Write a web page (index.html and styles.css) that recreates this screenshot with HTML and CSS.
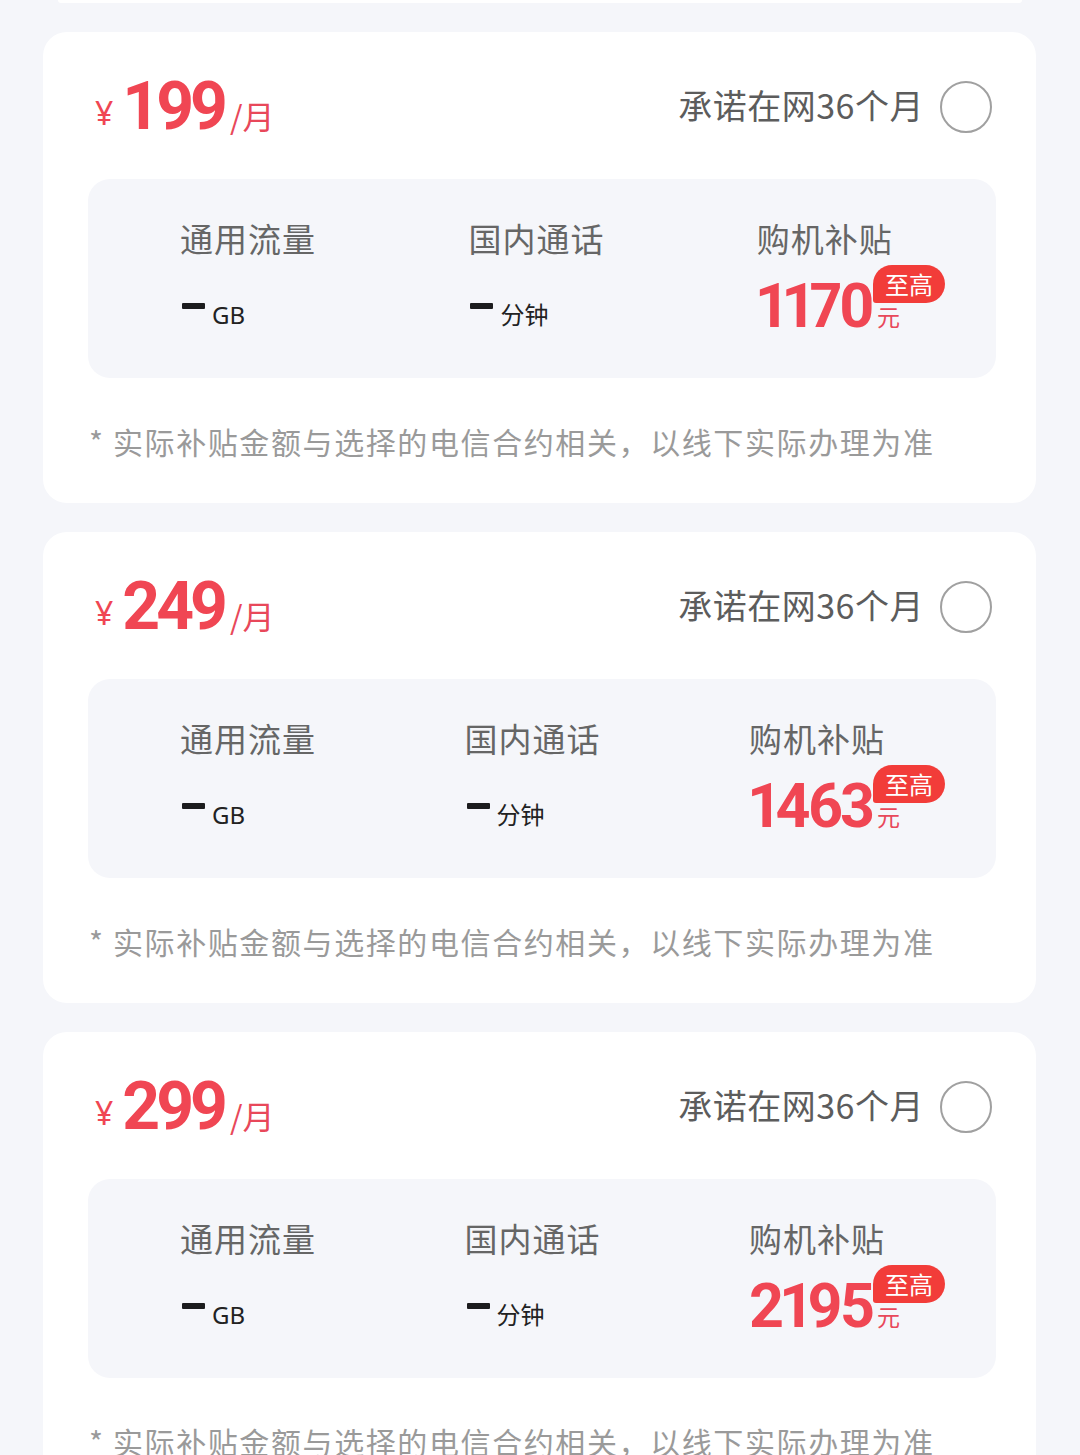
FILE: index.html
```html
<!DOCTYPE html>
<html lang="zh-CN">
<head>
<meta charset="utf-8">
<title>套餐选择</title>
<link rel="stylesheet" href="styles.css">
</head>
<body>
<div class="page">
  <div class="prev-tail"></div>

  <div class="card">
    <div class="card-head">
      <div class="price"><span class="yen">¥</span><span class="amount">199</span><span class="per">/月</span></div>
      <div class="term"><span class="term-text">承诺在网36个月</span><span class="radio"></span></div>
    </div>
    <div class="features">
      <div class="feat">
        <div class="feat-label">通用流量</div>
        <div class="feat-value"><span class="dash"></span><span class="unit">GB</span></div>
      </div>
      <div class="feat">
        <div class="feat-label">国内通话</div>
        <div class="feat-value"><span class="dash"></span><span class="unit">分钟</span></div>
      </div>
      <div class="feat">
        <div class="feat-label">购机补贴</div>
        <div class="feat-value"><span class="money-num">1170</span><span class="money-side"><span class="badge">至高</span><span class="yuan">元</span></span></div>
      </div>
    </div>
    <div class="note">* 实际补贴金额与选择的电信合约相关，以线下实际办理为准</div>
  </div>

  <div class="card">
    <div class="card-head">
      <div class="price"><span class="yen">¥</span><span class="amount">249</span><span class="per">/月</span></div>
      <div class="term"><span class="term-text">承诺在网36个月</span><span class="radio"></span></div>
    </div>
    <div class="features">
      <div class="feat">
        <div class="feat-label">通用流量</div>
        <div class="feat-value"><span class="dash"></span><span class="unit">GB</span></div>
      </div>
      <div class="feat">
        <div class="feat-label">国内通话</div>
        <div class="feat-value"><span class="dash"></span><span class="unit">分钟</span></div>
      </div>
      <div class="feat">
        <div class="feat-label">购机补贴</div>
        <div class="feat-value"><span class="money-num">1463</span><span class="money-side"><span class="badge">至高</span><span class="yuan">元</span></span></div>
      </div>
    </div>
    <div class="note">* 实际补贴金额与选择的电信合约相关，以线下实际办理为准</div>
  </div>

  <div class="card">
    <div class="card-head">
      <div class="price"><span class="yen">¥</span><span class="amount">299</span><span class="per">/月</span></div>
      <div class="term"><span class="term-text">承诺在网36个月</span><span class="radio"></span></div>
    </div>
    <div class="features">
      <div class="feat">
        <div class="feat-label">通用流量</div>
        <div class="feat-value"><span class="dash"></span><span class="unit">GB</span></div>
      </div>
      <div class="feat">
        <div class="feat-label">国内通话</div>
        <div class="feat-value"><span class="dash"></span><span class="unit">分钟</span></div>
      </div>
      <div class="feat">
        <div class="feat-label">购机补贴</div>
        <div class="feat-value"><span class="money-num">2195</span><span class="money-side"><span class="badge">至高</span><span class="yuan">元</span></span></div>
      </div>
    </div>
    <div class="note">* 实际补贴金额与选择的电信合约相关，以线下实际办理为准</div>
  </div>
</div>
</body>
</html>
```

FILE: styles.css
```css
* { box-sizing: border-box; }

html, body {
  margin: 0;
  padding: 0;
  background: #f5f6fa;
}

body {
  font-family: "Noto Sans", "Noto Sans CJK SC", sans-serif;
  color: #222;
}

.page {
  display: flex;
  flex-direction: column;
  gap: 29px;
}

.prev-tail {
  height: 3px;
  margin: 0 58px;
  background: #fff;
  border-radius: 0 0 4px 4px;
}

.card {
  margin: 0 44px 0 43px;
  background: #fff;
  border-radius: 24px;
  padding: 0 40px 0 45px;
}

.card-head {
  height: 147px;
  display: flex;
  align-items: center;
  justify-content: space-between;
}

.price {
  display: flex;
  align-items: baseline;
  color: #f04653;
  margin-top: 2px;
}

.yen {
  font-family: "Noto Sans", sans-serif;
  font-size: 32px;
  margin-left: 7px;
  margin-right: 9px;
  position: relative;
  top: -4px;
}

.amount {
  font-family: Roboto, "Noto Sans", sans-serif;
  font-weight: 700;
  font-size: 66px;
  line-height: 1;
  letter-spacing: -4px;
}

.per {
  font-family: "Noto Sans CJK SC", sans-serif;
  font-size: 32px;
  margin-left: 6px;
  color: #e8485a;
}

.term {
  display: flex;
  align-items: center;
}

.term-text {
  font-family: "Noto Sans CJK SC", sans-serif;
  font-size: 34px;
  letter-spacing: 0.5px;
  color: #5c5c5c;
  line-height: 1.2;
}

.radio {
  width: 52px;
  height: 52px;
  border: 2px solid #a0a0a0;
  border-radius: 50%;
  margin-left: 16px;
  margin-right: 4px;
  margin-top: 2px;
}

.features {
  height: 199px;
  background: #f5f6fa;
  border-radius: 22px;
  padding: 39px 51px 0 92px;
  display: flex;
  justify-content: space-between;
}

.feat {
  display: flex;
  flex-direction: column;
}

.feat-label {
  font-family: "Noto Sans CJK SC", sans-serif;
  font-size: 33px;
  line-height: 40px;
  letter-spacing: 1px;
  color: #666;
}

.feat-value {
  margin-top: 18px;
  height: 60px;
  display: flex;
  align-items: flex-end;
}

.dash {
  display: inline-block;
  width: 23px;
  height: 6px;
  background: #1c1c1e;
  border-radius: 1px;
  margin-left: 2px;
  margin-bottom: 27px;
}

.unit {
  font-family: "Noto Sans", "Noto Sans CJK SC", sans-serif;
  font-size: 24px;
  line-height: 24px;
  color: #222;
  margin-left: 7px;
  margin-bottom: 9px;
}

.money-num {
  font-family: Roboto, "Noto Sans", sans-serif;
  font-weight: 700;
  font-size: 61px;
  line-height: 60px;
  letter-spacing: -3px;
  font-variant-numeric: proportional-nums;
  color: #f04653;
}

.money-side {
  display: flex;
  flex-direction: column;
  align-items: flex-start;
  margin-left: 1px;
  margin-bottom: 8px;
}

.badge {
  height: 38px;
  padding: 0 12px;
  background: #f23c39;
  color: #fff;
  font-family: "Noto Sans CJK SC", sans-serif;
  font-size: 24px;
  line-height: 38px;
  border-radius: 19px 19px 19px 3px;
}

.yuan {
  font-family: "Noto Sans CJK SC", sans-serif;
  font-size: 23px;
  line-height: 24px;
  color: #e8485a;
  margin-top: 1px;
  margin-left: 4px;
}

.note {
  height: 125px;
  display: flex;
  align-items: center;
  font-family: "Noto Sans CJK SC", sans-serif;
  font-size: 30px;
  letter-spacing: 1.6px;
  color: #9a9a9a;
  padding-left: 1px;
  white-space: nowrap;
}
```
